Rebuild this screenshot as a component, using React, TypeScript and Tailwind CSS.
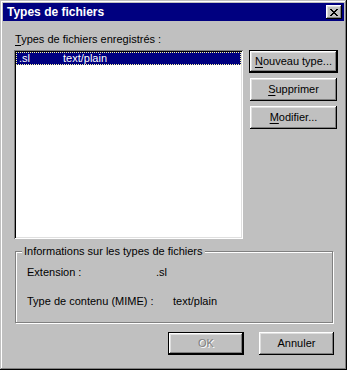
import React from 'react'

const bevel = 'shadow-[inset_-1px_-1px_#000,inset_1px_1px_#fff,inset_-2px_-2px_#808080,inset_2px_2px_#dfdfdf]'

function Btn({ label, u, rest, def, disabled, w }: { label?: string; u?: string; rest?: string; def?: boolean; disabled?: boolean; w: string }) {
    const inner = (
        <div className={`h-full w-full flex items-center justify-center bg-[#c0c0c0] ${bevel}`}>
            {disabled ? (
                <span className="text-[#808080] [text-shadow:1px_1px_#fff]">{label}</span>
            ) : (
                <span className="text-black">
                    {u && <span className="underline underline-offset-2">{u}</span>}
                    {rest}
                </span>
            )}
        </div>
    )
    return (
        <div className={`${w} h-[23px] shrink-0 ${def ? 'border border-black' : ''}`}>
            {inner}
        </div>
    )
}

export default function App() {
    return (
        <div className="w-[347px] h-[370px] bg-[#c0c0c0] p-[3px] flex flex-col text-[11px] leading-none text-black shadow-[inset_-1px_-1px_#000,inset_1px_1px_#c0c0c0,inset_-2px_-2px_#808080,inset_2px_2px_#fff]" style={{ fontFamily: '"Liberation Sans", Arial, sans-serif' }}>
            {/* title bar */}
            <div className="h-[18px] bg-[#000080] flex items-center justify-between pl-[4px] pr-[2px]">
                <span className="text-white font-bold text-[12px]">Types de fichiers</span>
                <div className={`w-[16px] h-[14px] bg-[#c0c0c0] flex items-center justify-center ${bevel}`}>
                    <svg width="8" height="7" viewBox="0 0 8 7" shapeRendering="crispEdges">
                        <path d="M0 0h2v1h-2zM6 0h2v1h-2zM1 1h2v1h-2zM5 1h2v1h-2zM2 2h4v1h-4zM3 3h2v1h-2zM2 4h4v1h-4zM1 5h2v1h-2zM5 5h2v1h-2zM0 6h2v1h-2zM6 6h2v1h-2z" fill="#000" />
                    </svg>
                </div>
            </div>

            <div className="flex-1 flex flex-col pl-[11px] pr-[4px]">
                <div className="mt-[13px] h-[12px] pl-[1px]">
                    <span className="underline underline-offset-2">T</span>ypes de fichiers enregistrés :
                </div>

                <div className="flex mt-[4px]">
                    {/* list */}
                    <div className="w-[229px] h-[189px] shrink-0 bg-white p-[2px] shadow-[inset_1px_1px_#808080,inset_-1px_-1px_#fff,inset_2px_2px_#000,inset_-2px_-2px_#dfdfdf]">
                        <div className="h-[13px] bg-[#000080] text-white border border-dotted border-[#ffffa0] flex items-center">
                            <span className="w-[46px] pl-[2px]">.sl</span>
                            <span>text/plain</span>
                        </div>
                    </div>

                    <div className="ml-[6px] flex flex-col gap-[4px]">
                        <Btn w="w-[89px]" def u="N" rest="ouveau type..." />
                        <div className="px-[1px] flex flex-col gap-[5px] mt-[1px]">
                            <Btn w="w-[87px]" u="S" rest="upprimer" />
                            <Btn w="w-[87px]" u="M" rest="odifier..." />
                        </div>
                    </div>
                </div>

                {/* group box */}
                <div className="relative mt-[12px] ml-[1px] w-[318px] h-[72px] border border-[#808080] shadow-[inset_1px_1px_#fff,1px_1px_#fff]">
                    <span className="absolute -top-[6px] left-[6px] px-[2px] bg-[#c0c0c0]">Informations sur les types de fichiers</span>
                    <div className="flex mt-[15px] ml-[11px]">
                        <span className="w-[129px]">Extension :</span>
                        <span>.sl</span>
                    </div>
                    <div className="flex mt-[18px] ml-[11px]">
                        <span className="w-[146px]">Type de contenu (MIME) :</span>
                        <span>text/plain</span>
                    </div>
                </div>

                <div className="flex justify-end gap-[15px] mt-[9px] pr-[6px]">
                    <Btn w="w-[76px]" def disabled label="OK" />
                    <Btn w="w-[75px]" u="" rest="Annuler" />
                </div>
            </div>
        </div>
    )
}
